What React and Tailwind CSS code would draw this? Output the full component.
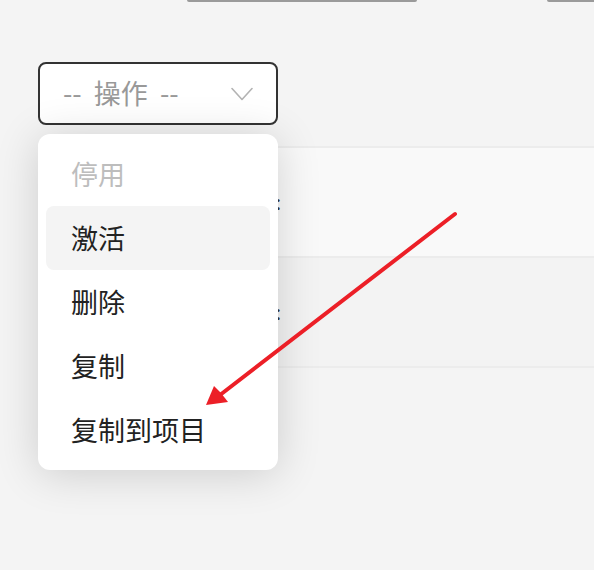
import React from 'react'

const items = [
  { label: '停用', disabled: true },
  { label: '激活', active: true },
  { label: '删除' },
  { label: '复制' },
  { label: '复制到项目' },
]

const Chevron = () => (
  <svg width="22" height="14" viewBox="0 0 22 14" fill="none">
    <path d="M1 1.5 L11 12.5 L21 1.5" stroke="#b3b3b3" strokeWidth="1.6" strokeLinecap="round" strokeLinejoin="round" />
  </svg>
)

const Arrow = () => (
  <svg className="absolute left-0 top-0 pointer-events-none" width="594" height="570" viewBox="0 0 594 570">
    <line x1="455" y1="214" x2="220" y2="395" stroke="#ec1f27" strokeWidth="4" strokeLinecap="round" />
    <polygon points="206,405 214,386 221,393 228,402" fill="#ec1f27" />
  </svg>
)

export default function App() {
  return (
    <div
      className="relative h-[570px] w-[594px] overflow-hidden bg-[#f4f4f4]"
      style={{ fontFamily: '"Noto Sans CJK SC", "Noto Sans", sans-serif' }}
    >
      {/* bottoms of the fields above */}
      <div className="flex h-[2px]">
        <div className="ml-[187px] w-[230px] rounded-b bg-[#9a9a9a]" />
        <div className="ml-[130px] flex-1 rounded-bl bg-[#9a9a9a]" />
      </div>

      {/* select */}
      <div className="ml-[38px] mt-[60px] flex h-[63px] w-[240px] items-center justify-between rounded-[8px] border-2 border-[#333] bg-white pl-[23px] pr-[23px]">
        <span className="whitespace-pre text-[27px] text-[#999]">--  操作  --</span>
        <Chevron />
      </div>

      {/* table rows behind the menu */}
      <div className="ml-[38px] mt-[21px]">
        <div className="flex h-[110px] border-t-2 border-[#ececec] bg-[#f9f9f9]">
          <div className="flex w-[243px] flex-col items-end justify-center text-[20px] leading-[16px] text-[#333]">
            <span>:</span>
          </div>
        </div>
        <div className="flex h-[110px] border-t-2 border-[#ececec] bg-[#f3f3f3]">
          <div className="flex w-[243px] flex-col items-end justify-center text-[20px] leading-[16px] text-[#333]">
            <span>:</span>
          </div>
        </div>
        <div className="border-t-2 border-[#ececec]" />
      </div>

      {/* dropdown menu */}
      <div className="absolute left-[38px] top-[134px] w-[240px] rounded-[12px] bg-white p-[8px] shadow-[0_4px_44px_rgba(0,0,0,0.16)]">
        {items.map((item) => (
          <div
            key={item.label}
            className={
              'flex h-[64px] items-center rounded-[8px] pl-[25px] text-[27px] ' +
              (item.disabled ? 'text-[#bdbdbd] ' : 'text-[#222] ') +
              (item.active ? 'bg-[#f4f4f4]' : '')
            }
          >
            {item.label}
          </div>
        ))}
      </div>

      <Arrow />
    </div>
  )
}
